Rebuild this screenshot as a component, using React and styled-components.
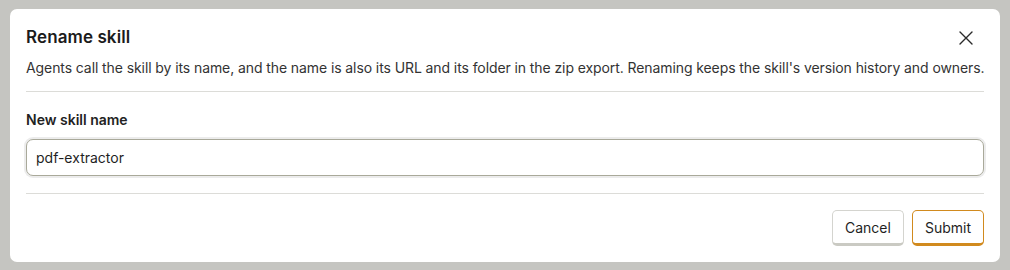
import React from "react";
import styled, { createGlobalStyle } from "styled-components";

const Global = createGlobalStyle`
  html, body { margin: 0; padding: 0; }
  body {
    background: #c5c5c1;
    font-family: Inter, "Noto Sans", sans-serif;
    width: 1010px;
    height: 270px;
    overflow: hidden;
  }
`;

const Backdrop = styled.div`
  padding: 9px 10px 8px 10px;
  box-sizing: border-box;
  width: 1010px;
  height: 270px;
`;

const Dialog = styled.div`
  background: #ffffff;
  border-radius: 7px;
  padding: 16px;
  box-sizing: border-box;
  width: 990px;
  height: 253px;
  display: flex;
  flex-direction: column;
`;

const Header = styled.div`
  height: 24px;
  display: flex;
  align-items: flex-start;
  justify-content: space-between;
`;

const Title = styled.h2`
  margin: 0;
  font-size: 17px;
  line-height: 24px;
  font-weight: 600;
  color: #1b1b1b;
  letter-spacing: 0.1px;
`;

const CloseButton = styled.button`
  border: none;
  background: transparent;
  padding: 0;
  width: 24px;
  height: 24px;
  display: flex;
  align-items: center;
  justify-content: center;
  margin-top: 1px;
  margin-right: 6px;
  color: #2a2a2a;
  cursor: pointer;
`;

const Description = styled.p`
  margin: 9px 0 0 0;
  font-size: 14px;
  line-height: 20px;
  color: #333333;
  white-space: nowrap;
  letter-spacing: -0.09px;
`;

const Divider = styled.hr`
  border: none;
  border-top: 1px solid #dcdcd8;
  margin: ${(p) => p.$top}px 0 0 0;
`;

const Label = styled.label`
  margin-top: 18px;
  font-size: 14px;
  line-height: 20px;
  font-weight: 600;
  color: #222222;
`;

const Input = styled.input`
  margin-top: 9px;
  height: 37px;
  box-sizing: border-box;
  border: 1px solid #a9a99a;
  border-radius: 7px;
  box-shadow: 0 0 0 2px #ececec;
  padding: 0 9px;
  font-family: Inter, "Noto Sans", sans-serif;
  font-size: 14px;
  color: #1f1f1f;
  outline: none;
  background: #fff;
`;

const Footer = styled.div`
  margin-top: 16px;
  display: flex;
  justify-content: flex-end;
  gap: 8px;
`;

const Button = styled.button`
  height: 36px;
  box-sizing: border-box;
  padding: 0 12px;
  background: #ffffff;
  border: 1px solid ${(p) => (p.$primary ? "#d18a1e" : "#d4d4cf")};
  border-bottom: 3px solid ${(p) => (p.$primary ? "#d18a1e" : "#cacac3")};
  border-radius: 5px;
  font-family: Inter, "Noto Sans", sans-serif;
  font-size: 14px;
  color: #1f1f1f;
  min-width: 72px;
  cursor: pointer;
`;

export default function App() {
  return (
    <>
      <Global />
      <Backdrop>
        <Dialog>
          <Header>
            <Title>Rename skill</Title>
            <CloseButton aria-label="Close">
              <svg width="16" height="16" viewBox="0 0 16 16" fill="none" stroke="currentColor" strokeWidth="1.4" strokeLinecap="round">
                <path d="M2 2 L14 14 M14 2 L2 14" />
              </svg>
            </CloseButton>
          </Header>
          <Description>
            Agents call the skill by its name, and the name is also its URL and its folder in the zip export. Renaming keeps the skill's version history and owners.
          </Description>
          <Divider $top={13} />
          <Label htmlFor="skill-name">New skill name</Label>
          <Input id="skill-name" defaultValue="pdf-extractor" />
          <Divider $top={17} />
          <Footer>
            <Button>Cancel</Button>
            <Button $primary>Submit</Button>
          </Footer>
        </Dialog>
      </Backdrop>
    </>
  );
}
